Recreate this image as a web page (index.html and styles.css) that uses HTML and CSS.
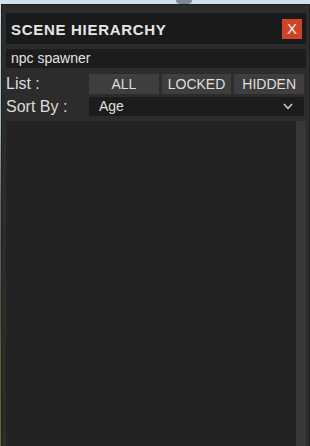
FILE: index.html
```html
<!DOCTYPE html>
<html>
<head>
<meta charset="utf-8">
<link rel="stylesheet" href="styles.css">
</head>
<body>
<div class="backdrop">
  <div class="rock"></div>
</div>
<div class="panel">
  <div class="header">
    <span class="title">SCENE HIERARCHY</span>
    <button class="close">X</button>
  </div>
  <div class="search">npc spawner</div>
  <div class="row">
    <span class="label">List :</span>
    <div class="tabs">
      <span class="tab">ALL</span>
      <span class="tab">LOCKED</span>
      <span class="tab">HIDDEN</span>
    </div>
  </div>
  <div class="row row-sort">
    <span class="label">Sort By :</span>
    <div class="select">
      <span>Age</span>
      <svg class="chev" width="10" height="7" viewBox="0 0 10 7"><path d="M1 1 L5 5.5 L9 1" fill="none" stroke="#d8d8d8" stroke-width="1.4"/></svg>
    </div>
  </div>
  <div class="content">
    <div class="list"></div>
    <div class="scrollbar"></div>
  </div>
</div>
</body>
</html>
```
FILE: styles.css
```css
* { box-sizing: border-box; }
html, body {
  margin: 0;
  padding: 0;
  width: 310px;
  height: 446px;
  overflow: hidden;
}
body {
  background: linear-gradient(#c9dfea 0px, #9fb8c8 120px, #5d6a74 200px, #5a5a3a 300px, #6b6a3c 446px);
  font-family: "Liberation Sans", Arial, sans-serif;
  position: relative;
}
.backdrop {
  height: 4px;
  position: relative;
  background: #cfe2ec;
}
.rock {
  position: absolute;
  left: 176px;
  top: 0;
  width: 16px;
  height: 4px;
  background: #7f8a96;
  border-radius: 0 0 6px 6px;
}
.panel {
  margin-left: 1px;
  height: 442px;
  background: #2c2c2c;
  border: 1px solid #1f1f1f;
  border-bottom: none;
  padding: 8px 3px 0 4px;
  display: flex;
  flex-direction: column;
}
.header {
  height: 31px;
  background: #1a1a1a;
  display: flex;
  align-items: center;
  justify-content: space-between;
  padding: 0 4px 0 5px;
}
.title {
  color: #e6e6e6;
  font-weight: bold;
  font-size: 15px;
  letter-spacing: 0.7px;
  padding-top: 1px;
}
.close {
  width: 20px;
  height: 20px;
  border: none;
  padding: 0;
  background: #cf4326;
  color: #f2f2f2;
  font-family: "Liberation Sans", Arial, sans-serif;
  font-size: 15px;
  line-height: 20px;
  text-align: center;
}
.search {
  margin-top: 5px;
  height: 19px;
  background: #1c1c1c;
  color: #e2e2e2;
  font-size: 14px;
  line-height: 19px;
  padding-left: 5px;
}
.row {
  display: flex;
  align-items: center;
  height: 20px;
  margin-top: 6px;
}
.row-sort {
  margin-top: 3px;
  height: 19px;
}
.label {
  width: 83px;
  color: #dcdcdc;
  font-size: 16px;
  line-height: 20px;
}
.tabs {
  display: flex;
  gap: 3px;
  width: 215px;
  height: 20px;
}
.tab {
  flex: 1;
  background: #3e3e3e;
  color: #dedede;
  font-size: 14px;
  line-height: 20px;
  text-align: center;
}
.select {
  width: 215px;
  height: 19px;
  background: #1c1c1c;
  color: #e0e0e0;
  font-size: 14px;
  line-height: 19px;
  padding: 0 11px 0 10px;
  display: flex;
  align-items: center;
  justify-content: space-between;
}
.content {
  margin-top: 5px;
  flex: 1;
  display: flex;
}
.list {
  flex: 1;
  background: #232323;
}
.scrollbar {
  width: 10px;
  background: #383838;
}
```
